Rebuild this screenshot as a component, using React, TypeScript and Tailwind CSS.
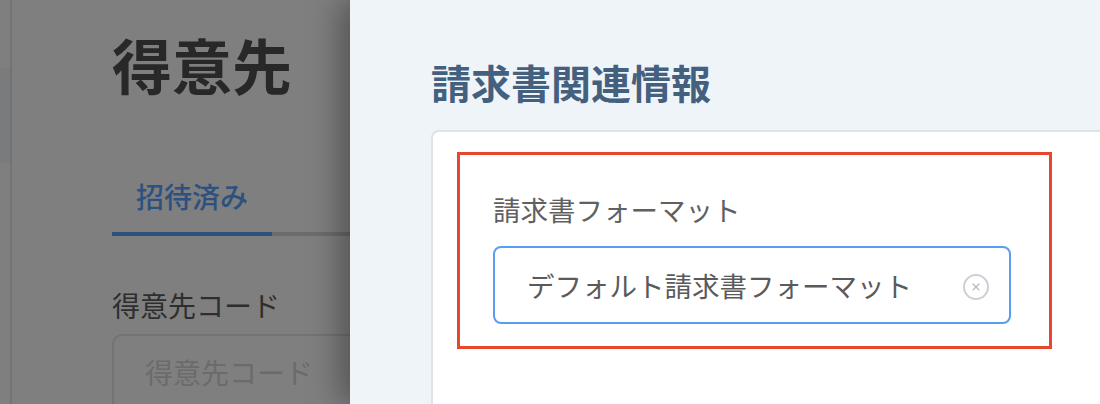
import { X } from "lucide-react";

const font = { fontFamily: '"Noto Sans CJK JP", "Noto Sans", sans-serif' };

function BackgroundPage() {
  return (
    <div className="flex h-full w-full bg-white">
      {/* Sidebar (mostly hidden) */}
      <div className="w-[12px] shrink-0 border-r-2 border-[#e6e6e6] pt-[68px]">
        <div className="h-[95px] bg-[#f3f6fa]" />
      </div>

      {/* Main */}
      <main className="flex-1 pl-[100px] pt-[34px]">
        <h1 className="text-[60px] font-bold leading-[60px] text-[#505050]">得意先</h1>

        <div className="mt-[88px] flex border-b-4 border-[#d8d8d8]">
          <div className="-mb-[4px] w-[160px] border-b-4 border-[#5aa2ff] pb-[22px] text-center text-[28px] font-medium leading-[28px] text-[#5aa2ff]">
            招待済み
          </div>
        </div>

        <div className="mt-[55px] text-[28px] leading-[28px] text-[#5c5c5c]">得意先コード</div>
        <div className="mt-[15px] h-[80px] w-[400px] rounded-[10px] border-2 border-[#e6e6e6] px-[31px] pt-[22px] text-[28px] leading-[28px] text-[#d6d6d6]">
          得意先コード
        </div>
      </main>
    </div>
  );
}

function InvoiceDrawer() {
  return (
    <aside className="absolute bottom-0 right-0 top-0 w-[750px] bg-[#eff4f9] pl-[81px] pt-[62px] shadow-[-10px_0_30px_rgba(0,0,0,0.35)]">
      <h2 className="text-[40px] font-bold leading-[40px] text-[#44607f]">請求書関連情報</h2>

      <div className="mt-[28px] h-[300px] rounded-tl-[8px] border-l-2 border-t-2 border-[#dfe3e8] bg-white pl-[24px] pt-[20px]">
        <div className="w-[595px] border-[3px] border-[#e8472f] pb-[22px] pl-[33px] pr-[38px] pt-[40px]">
          <label className="block text-[27.5px] leading-[28px] text-[#606060]">請求書フォーマット</label>
          <div className="mt-[23px] flex h-[78px] items-center rounded-[8px] border-2 border-[#5b9df5] pl-[32px] pr-[20px]">
            <span className="flex-1 text-[27.5px] leading-[28px] text-[#5a5a5a]">デフォルト請求書フォーマット</span>
            <span className="mt-[4px] flex h-[26px] w-[26px] items-center justify-center rounded-full border-2 border-[#cdd0d5]">
              <X className="h-[12px] w-[12px] text-[#b4b8be]" strokeWidth={2.2} />
            </span>
          </div>
        </div>
      </div>
    </aside>
  );
}

export default function App() {
  return (
    <div className="relative h-[404px] w-[1100px] overflow-hidden" style={font}>
      <BackgroundPage />
      {/* Modal backdrop */}
      <div className="absolute inset-0 bg-black/50" />
      <InvoiceDrawer />
    </div>
  );
}
